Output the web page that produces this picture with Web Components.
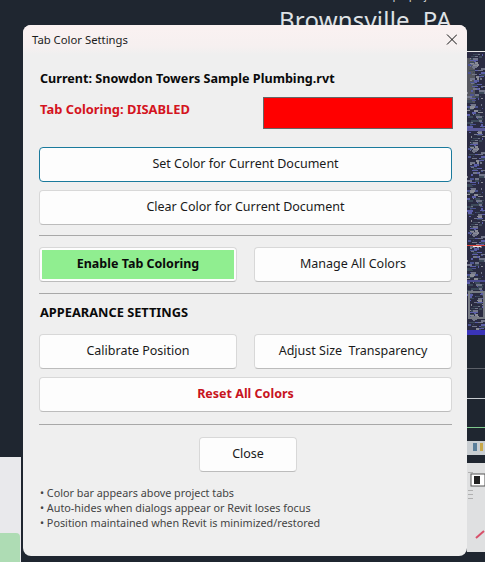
<!DOCTYPE html>
<html>
<head>
<meta charset="utf-8">
<style>
  html, body { margin: 0; height: 100%; overflow: hidden; background: #1f2630; }
</style>
</head>
<body>
<cad-backdrop></cad-backdrop>
<settings-dialog heading="Tab Color Settings">
  <p-row>
    <status-text kind="title">Current: Snowdon Towers Sample Plumbing.rvt</status-text>
  </p-row>
  <p-row class="status">
    <status-text kind="alert">Tab Coloring: DISABLED</status-text>
    <color-swatch></color-swatch>
  </p-row>
  <p-row class="first"><ui-button focused>Set Color for Current Document</ui-button></p-row>
  <p-row class="tight"><ui-button>Clear Color for Current Document</ui-button></p-row>
  <h-rule class="a"></h-rule>
  <p-row class="pair">
    <ui-button variant="green">Enable Tab Coloring</ui-button>
    <ui-button>Manage All Colors</ui-button>
  </p-row>
  <h-rule class="b"></h-rule>
  <status-text kind="section">APPEARANCE SETTINGS</status-text>
  <p-row class="pair">
    <ui-button>Calibrate Position</ui-button>
    <ui-button>Adjust Size&nbsp; Transparency</ui-button>
  </p-row>
  <p-row class="tight"><ui-button variant="danger">Reset All Colors</ui-button></p-row>
  <h-rule class="c"></h-rule>
  <p-row class="center"><ui-button small>Close</ui-button></p-row>
  <note-list>
    <div>• Color bar appears above project tabs</div>
    <div>• Auto-hides when dialogs appear or Revit loses focus</div>
    <div>• Position maintained when Revit is minimized/restored</div>
  </note-list>
</settings-dialog>

<script>
const FONT = '"Noto Sans", "Open Sans", sans-serif';

class CadBackdrop extends HTMLElement {
  constructor() {
    super();
    const root = this.attachShadow({ mode: "open" });
    root.innerHTML = `<style>
      :host { position: absolute; inset: 0; display: block; overflow: hidden; }
      .place { position: absolute; left: 279px; top: 5px; font: 24px/30px ${FONT}; color: #dfe2e6; white-space: nowrap; letter-spacing: 0.2px; }
      .sub { position: absolute; left: 290px; top: -9px; font: 9.5px/12px ${FONT}; color: #e4e6e9; white-space: nowrap; }
      .sheet { position: absolute; left: 0; top: 457px; width: 21px; height: 105px; background: #e9e9ec; }
      .map { position: absolute; left: 0; top: 533px; width: 20px; height: 29px; background: #aedcb4; border-top-right-radius: 4px; }
      svg { position: absolute; left: 467px; top: 0; }
    </style>
    <div class="sub">for Autodesk Revit sample project</div>
    <div class="place">Brownsville, PA</div>
    <div class="sheet"></div>
    <div class="map"></div>
    ${this.buildStrip()}`;
  }

  // right hand strip: the drawing behind the dialog
  buildStrip() {
    let dom = `<svg width="18" height="562" viewBox="0 0 18 562">
      <rect y="51" width="18" height="1" fill="#e8e8e8"/>
      <rect y="52" width="18" height="283" fill="#2a2b42"/>
      <rect x="0" y="58" width="8" height="45" fill="#55575f"/>
      <rect y="441" width="18" height="14" fill="#c9ced2"/>
      <rect y="463" width="18" height="89" fill="#dfe0e1"/>`;
    let seed = 7;
    const next = (n) => {
      seed = (seed * 137 + 91) % 1009;
      return seed % n;
    };
    const colors = ["#72768a", "#4b5390", "#8a8c96", "#3c4a5a", "#5c5fa8"];
    for (let y = 54; y < 330; y += 2) {
      for (let i = 0; i < 3; i++) {
        const x = next(16);
        dom += `<rect x="${x}" y="${y}" width="${1 + next(6)}" height="${1 + next(2)}" fill="${colors[next(5)]}"/>`;
      }
    }
    dom += `<rect y="128" width="18" height="3" fill="#5a5a9a"/>
      <rect y="245" width="18" height="1" fill="#d9423a"/>
      <rect x="6" y="246" width="8" height="1" fill="#f0e8e8"/>
      <rect y="280" width="18" height="2" fill="#4a4a90"/>
      <path d="M2 292h15v26H2z" fill="none" stroke="#777b84" stroke-width="2"/>
      <rect y="330" width="18" height="5" fill="#3a34b8"/>
      <rect y="368" width="18" height="1" fill="#5c6068"/>
      <rect y="398" width="18" height="1" fill="#c8ccd0"/>
      <rect y="427" width="18" height="1" fill="#7fc98d"/>
      <rect x="6" y="443" width="4" height="8" fill="#5a7f9a"/>
      <rect x="13" y="443" width="3" height="8" fill="#c9a94a"/>
      <rect x="4" y="474" width="14" height="12" fill="#ffffff" stroke="#555"/>
      <rect x="7" y="476" width="6" height="8" fill="#222"/>
      <rect x="1" y="472" width="5" height="1" fill="#b0b0b0"/>
      <rect x="1" y="490" width="5" height="1" fill="#b0b0b0"/>
      <rect x="1" y="494" width="5" height="1" fill="#b0b0b0"/>
      <rect x="1" y="498" width="5" height="1" fill="#b0b0b0"/>
      <path d="M9 538l8-7" stroke="#d8506a" stroke-width="2"/>`;
    return dom + "</svg>";
  }
}

class SettingsDialog extends HTMLElement {
  constructor() {
    super();
    const root = this.attachShadow({ mode: "open" });
    root.innerHTML = `<style>
      :host { position: absolute; left: 23px; top: 25px; width: 444px; height: 531px; display: block;
        background: #efefef; border-radius: 8px; font-family: ${FONT}; overflow: hidden; }
      .bar { box-sizing: border-box; height: 30px; padding: 0 10px 1px 9px; display: flex; align-items: center; justify-content: space-between;
        background: linear-gradient(#faf1f1, #f6f0f0 70%, #efefef); font-size: 11.3px; color: #1c1c1c; }
      .close { width: 11px; height: 11px; display: block; }
      .body { padding: 15px 15px 0 16px; display: flex; flex-direction: column; }
    </style>
    <div class="bar">
      <span>${this.getAttribute("heading")}</span>
      <svg class="close" viewBox="0 0 11 11"><path d="M1 0.5l10 10M11 0.5l-10 10" stroke="#111" stroke-width="1" fill="none"/></svg>
    </div>
    <div class="body"><slot></slot></div>`;
  }
}

class PRow extends HTMLElement {
  constructor() {
    super();
    const root = this.attachShadow({ mode: "open" });
    root.innerHTML = `<style>
      :host { display: block; }
      :host(.status) { display: flex; justify-content: space-between; align-items: flex-start; margin: 9px -1px 0 0; }
      :host(.first) { margin-top: 18px; }
      :host(.tight) { margin-top: 8px; }
      :host(.pair) { display: grid; grid-template-columns: 198px 198px; column-gap: 17px; }
      :host(.center) { display: flex; justify-content: center; padding-left: 5px; }
    </style><slot></slot>`;
  }
}

class StatusText extends HTMLElement {
  constructor() {
    super();
    const root = this.attachShadow({ mode: "open" });
    root.innerHTML = `<style>
      :host { display: block; font-weight: 700; color: #0a0a0a; font-size: 12.6px; line-height: 18px; padding-left: 1px; white-space: nowrap; }
      :host([kind="alert"]) { color: #d4141e; font-size: 12.9px; margin-top: 3px; }
      :host([kind="section"]) { font-size: 12.8px; margin: 0 0 13px; }
    </style><slot></slot>`;
  }
}

class ColorSwatch extends HTMLElement {
  constructor() {
    super();
    const root = this.attachShadow({ mode: "open" });
    root.innerHTML = `<style>
      :host { display: block; box-sizing: border-box; width: 190px; height: 32px; background: #ff0000; border: 1px solid #666; }
    </style>`;
  }
}

class UiButton extends HTMLElement {
  constructor() {
    super();
    const root = this.attachShadow({ mode: "open" });
    root.innerHTML = `<style>
      :host { display: flex; box-sizing: border-box; height: 35px; align-items: center; justify-content: center;
        background: #fdfdfd; border: 1px solid #d8d8d8; border-bottom-color: #bcbcbc; border-radius: 4px;
        font-size: 12.5px; color: #1a1a1a; white-space: nowrap; }
      :host([focused]) { border-color: #1a7a9c; }
      :host([small]) { width: 98px; }
      :host([variant="danger"]) { color: #c8141e; font-weight: 700; }
      :host([variant="green"]) { padding: 2px; font-weight: 700; color: #0a0a0a; }
      .fill { box-sizing: border-box; display: flex; align-items: center; justify-content: center; width: 100%; height: 100%; padding-bottom: 2px; }
      :host([variant="green"]) .fill { background: #90ee90; }
    </style><div class="fill"><slot></slot></div>`;
  }
}

class HRule extends HTMLElement {
  constructor() {
    super();
    const root = this.attachShadow({ mode: "open" });
    root.innerHTML = `<style>
      :host { display: block; height: 1px; background: #a8a8a8; }
      :host(.a) { margin: 10px 0 11px; }
      :host(.b) { margin: 11px 0 9px; }
      :host(.c) { margin: 12px 0; }
    </style>`;
  }
}

class NoteList extends HTMLElement {
  constructor() {
    super();
    const root = this.attachShadow({ mode: "open" });
    root.innerHTML = `<style>
      :host { display: block; margin-top: 13px; padding-left: 1px; font-size: 10.8px; line-height: 15px; color: #444; white-space: nowrap; }
    </style><slot></slot>`;
  }
}

customElements.define("cad-backdrop", CadBackdrop);
customElements.define("settings-dialog", SettingsDialog);
customElements.define("p-row", PRow);
customElements.define("status-text", StatusText);
customElements.define("color-swatch", ColorSwatch);
customElements.define("ui-button", UiButton);
customElements.define("h-rule", HRule);
customElements.define("note-list", NoteList);
</script>
</body>
</html>
